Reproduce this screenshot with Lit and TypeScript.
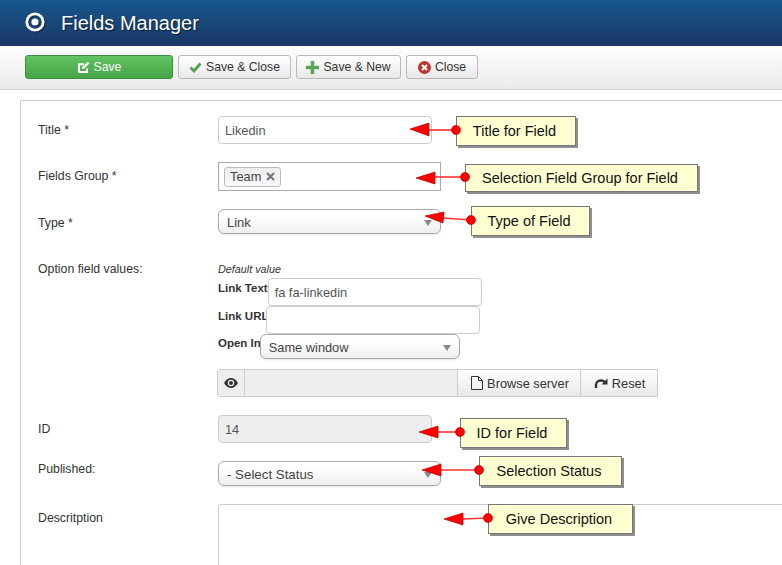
import { LitElement, html, css, svg } from 'lit';
import { customElement } from 'lit/decorators.js';

interface Note {
  text: string;
  left: number;
  top: number;
  width: number;
  height: number;
  dotY: number;
  // arrow head: tip, then the two corners of its base
  head: string;
  lineEnd: [number, number];
}

const NOTES: Note[] = [
  { text: 'Title for Field', left: 456, top: 116, width: 120, height: 30, dotY: 130, head: '410,129 429,123 429,136', lineEnd: [429, 130] },
  { text: 'Selection Field Group for Field', left: 465, top: 164, width: 233, height: 28, dotY: 177, head: '416,178 435,172 435,184', lineEnd: [435, 177] },
  { text: 'Type of Field', left: 471, top: 206, width: 119, height: 30, dotY: 220, head: '425,216 444,212 443,223', lineEnd: [443, 218] },
  { text: 'ID for Field', left: 460, top: 418, width: 107, height: 30, dotY: 432, head: '419,432 438,426 438,438', lineEnd: [438, 432] },
  { text: 'Selection Status', left: 479, top: 456, width: 143, height: 30, dotY: 470, head: '422,470 441,464 441,476', lineEnd: [441, 470] },
  { text: 'Give Description', left: 488, top: 504, width: 145, height: 30, dotY: 518, head: '444,519 463,513 463,525', lineEnd: [463, 519] },
];

@customElement('app-root')
export class AppRoot extends LitElement {
  static styles = css`
    :host {
      display: block;
      position: relative;
      width: 782px;
      height: 565px;
      overflow: hidden;
      background: #fff;
      font-family: 'Liberation Sans', Arial, sans-serif;
      font-size: 12.3px;
      color: #333;
    }

    .header {
      height: 46px;
      box-sizing: border-box;
      display: flex;
      align-items: center;
      gap: 16px;
      padding: 0 0 0 25px;
      background: linear-gradient(#17568c, #1a3867);
      color: #fff;
      font-size: 20px;
      text-shadow: 1px 1px 1px rgba(0, 0, 0, 0.6);
    }

    .header svg {
      margin-bottom: 3px;
      filter: drop-shadow(1px 1px 0 rgba(0, 0, 0, 0.5));
    }

    .toolbar {
      height: 44px;
      box-sizing: border-box;
      display: flex;
      gap: 5px;
      padding: 9px 0 0 25px;
      background: linear-gradient(#fdfdfd, #ebebeb);
      border-bottom: 1px solid #d4d4d4;
    }

    .btn {
      height: 24px;
      box-sizing: border-box;
      display: flex;
      align-items: center;
      justify-content: center;
      gap: 4px;
      border: 1px solid #b9b9b9;
      border-radius: 3px;
      background: linear-gradient(#fff, #e8e8e8);
      font-size: 12.2px;
      color: #333;
      white-space: nowrap;
    }

    .btn.save {
      width: 148px;
      border-color: #3c8f3c;
      background: linear-gradient(#62c462, #46a546);
      color: #fff;
    }

    .btn.save-close { width: 113px; }
    .btn.save-new { width: 105px; }
    .btn.close { width: 72px; }

    .panel {
      margin: 10px 0 0 20px;
      height: 500px;
      box-sizing: border-box;
      border: 1px solid #ccc;
      border-right: none;
      border-bottom: none;
      padding: 15px 0 0 17px;
      display: flex;
      flex-direction: column;
    }

    .row {
      display: grid;
      grid-template-columns: 180px 1fr;
      align-items: start;
    }

    .row > label {
      padding-top: 5px;
      line-height: 18px;
    }

    .row > label.flush { padding-top: 0; }
    .row > label.published { padding-top: 1px; }

    .input {
      height: 28px;
      box-sizing: border-box;
      width: 214px;
      display: flex;
      align-items: center;
      padding: 1px 6px 0;
      border: 1px solid #ccc;
      border-radius: 4px;
      background: #fff;
      font-size: 12.8px;
      color: #555;
    }

    .input.disabled { background: #eee; }

    .tags {
      width: 223px;
      height: 29px;
      box-sizing: border-box;
      display: flex;
      align-items: center;
      padding-left: 5px;
      border: 1px solid #aaa;
    }

    .tag {
      height: 20px;
      box-sizing: border-box;
      display: flex;
      align-items: center;
      gap: 5px;
      padding: 0 5px;
      border: 1px solid #bbb;
      border-radius: 3px;
      background: linear-gradient(#eee, #f8f8f8);
      font-size: 12.8px;
      color: #444;
    }

    .select {
      width: 223px;
      height: 25px;
      box-sizing: border-box;
      display: flex;
      align-items: center;
      justify-content: space-between;
      padding: 2px 8px 0;
      border: 1px solid #aaa;
      border-radius: 6px;
      background: linear-gradient(#fff 30%, #eee);
      box-shadow: 0 1px 2px rgba(0, 0, 0, 0.1);
      font-size: 13px;
      color: #444;
    }

    .select.small { width: 200px; font-size: 12.8px; }
    .select.status { font-size: 13.3px; margin-top: 2px; }

    .caret {
      width: 0;
      height: 0;
      border-left: 4px solid transparent;
      border-right: 4px solid transparent;
      border-top: 6px solid #888;
    }

    .options { display: flex; flex-direction: column; }

    .default-value {
      height: 18px;
      line-height: 18px;
      font-size: 10.8px;
      font-style: italic;
    }

    .option { display: flex; align-items: flex-start; }

    .option b {
      font-size: 11.5px;
      line-height: 15px;
      padding-top: 3px;
      color: #333;
    }

    .option.url b { margin-right: -2px; }
    .option.open b { margin-right: -1px; padding-top: 2px; }

    .media {
      display: flex;
      width: 441px;
      height: 28px;
      box-sizing: border-box;
      margin: 10px 0 0 -1px;
      border: 1px solid #ccc;
      border-radius: 3px 0 0 3px;
      font-size: 12.8px;
    }

    .media > div {
      display: flex;
      align-items: center;
      justify-content: center;
      gap: 4px;
      box-sizing: border-box;
    }

    .media .eye { width: 27px; background: #eee; border-right: 1px solid #ccc; }
    .media .path { flex: 1; background: #eee; }
    .media .action { background: linear-gradient(#fff, #e8e8e8); border-left: 1px solid #ccc; }
    .media .browse { width: 123px; padding-left: 2px; }
    .media .reset { width: 77px; padding-left: 1px; }

    .textarea {
      width: 564px;
      height: 70px;
      box-sizing: border-box;
      border: 1px solid #ccc;
      border-right: none;
      border-radius: 4px 0 0 0;
    }

    .overlay {
      position: absolute;
      inset: 0;
      pointer-events: none;
    }

    .overlay svg {
      position: absolute;
      left: 0;
      top: 0;
    }

    .note {
      position: absolute;
      box-sizing: border-box;
      display: flex;
      align-items: center;
      justify-content: center;
      padding-right: 3px;
      background: #ffffd2;
      border: 1px solid #777;
      box-shadow: 2px 2px 0 #8f8f8f;
      font-size: 14.5px;
      color: #111;
      white-space: nowrap;
    }
  `;

  private _arrow(n: Note) {
    return svg`
      <line x1=${n.left} y1=${n.dotY} x2=${n.lineEnd[0]} y2=${n.lineEnd[1]} stroke="#f33" stroke-width="1.6"></line>
      <polygon points=${n.head} fill="#f00" stroke="#a00" stroke-width="0.7"></polygon>
    `;
  }

  render() {
    return html`
      <div class="header">
        <svg width="20" height="20" viewBox="0 0 20 20">
          <circle cx="10" cy="10" r="8.2" fill="none" stroke="#fff" stroke-width="2.8"></circle>
          <circle cx="10" cy="10" r="3.6" fill="#fff"></circle>
        </svg>
        <span>Fields Manager</span>
      </div>

      <div class="toolbar">
        <div class="btn save">
          <svg width="13" height="13" viewBox="0 0 13 13">
            <path d="M10 7.5V11H2V3.2h5" fill="none" stroke="#fff" stroke-width="2"></path>
            <path d="M5 6.3 10.8 .8l1.6 1.6L6.6 8H5z" fill="#fff"></path>
          </svg>
          Save
        </div>
        <div class="btn save-close">
          <svg width="13" height="12" viewBox="0 0 13 12">
            <path d="M1.5 6.5 5 10l6.5-7.5" fill="none" stroke="#51a351" stroke-width="2.8"></path>
          </svg>
          Save &amp; Close
        </div>
        <div class="btn save-new">
          <svg width="13" height="13" viewBox="0 0 13 13">
            <path d="M6.5 0v13M0 6.5h13" stroke="#57a957" stroke-width="3.6"></path>
          </svg>
          Save &amp; New
        </div>
        <div class="btn close">
          <svg width="13" height="13" viewBox="0 0 13 13">
            <circle cx="6.5" cy="6.5" r="6.5" fill="#bd362f"></circle>
            <path d="M4 4l5 5M9 4l-5 5" stroke="#fff" stroke-width="2"></path>
          </svg>
          Close
        </div>
      </div>

      <div class="panel">
        <div class="row">
          <label>Title *</label>
          <div class="input">Likedin</div>
        </div>
        <div class="row" style="margin-top:18px">
          <label>Fields Group *</label>
          <div class="tags">
            <div class="tag">
              Team
              <svg width="9" height="9" viewBox="0 0 9 9">
                <path d="M1 1l7 7M8 1 1 8" stroke="#777" stroke-width="2.2"></path>
              </svg>
            </div>
          </div>
        </div>
        <div class="row" style="margin-top:18px">
          <label>Type *</label>
          <div class="select">Link <span class="caret"></span></div>
        </div>
        <div class="row" style="margin-top:26px">
          <label class="flush">Option field values:</label>
          <div class="options">
            <div class="default-value">Default value</div>
            <div class="option"><b>Link Text</b><div class="input">fa fa-linkedin</div></div>
            <div class="option url"><b>Link URL</b><div class="input"></div></div>
            <div class="option open"><b>Open In</b><div class="select small">Same window <span class="caret"></span></div></div>
            <div class="media">
              <div class="eye">
                <svg width="14" height="10" viewBox="0 0 14 10">
                  <path d="M0 5C2 1.800 4.500 0 7 0s5 1.800 7 5c-2 3.200-4.500 5-7 5S2 8.200 0 5z" fill="#333"></path>
                  <circle cx="7" cy="5" r="3.200" fill="#eee"></circle>
                  <circle cx="7" cy="5" r="2" fill="#333"></circle>
                </svg>
              </div>
              <div class="path"></div>
              <div class="action browse">
                <svg width="12" height="14" viewBox="0 0 12 14">
                  <path d="M.5.5h7l4 4v9H.5zM7.500.5v4h4" fill="none" stroke="#333"></path>
                </svg>
                Browse server
              </div>
              <div class="action reset">
                <svg width="14" height="13" viewBox="0 0 14 13">
                  <path d="M2 11V8C2 5 4.500 3.500 7 3.500c1.500 0 2.800.500 3.800 1.500" fill="none" stroke="#333" stroke-width="2.400"></path>
                  <path d="M13.500 1.500v6h-6z" fill="#333"></path>
                </svg>
                Reset
              </div>
            </div>
          </div>
        </div>
        <div class="row" style="margin-top:18px">
          <label>ID</label>
          <div class="input disabled">14</div>
        </div>
        <div class="row" style="margin-top:16px">
          <label class="published">Published:</label>
          <div class="select status">- Select Status <span class="caret"></span></div>
        </div>
        <div class="row" style="margin-top:18px">
          <label>Descritption</label>
          <div class="textarea"></div>
        </div>
      </div>

      <div class="overlay">
        <svg width="782" height="565">
          ${NOTES.map((n) => this._arrow(n))}
        </svg>
        ${NOTES.map(
          (n) => html`<div
            class="note"
            style="left:${n.left}px;top:${n.top}px;width:${n.width}px;height:${n.height}px"
          >${n.text}</div>`,
        )}
        <svg width="782" height="565">
          ${NOTES.map((n) => svg`<circle cx=${n.left} cy=${n.dotY} r="4.500" fill="#f00" stroke="#b00" stroke-width="0.7"></circle>`)}
        </svg>
      </div>
    `;
  }
}
